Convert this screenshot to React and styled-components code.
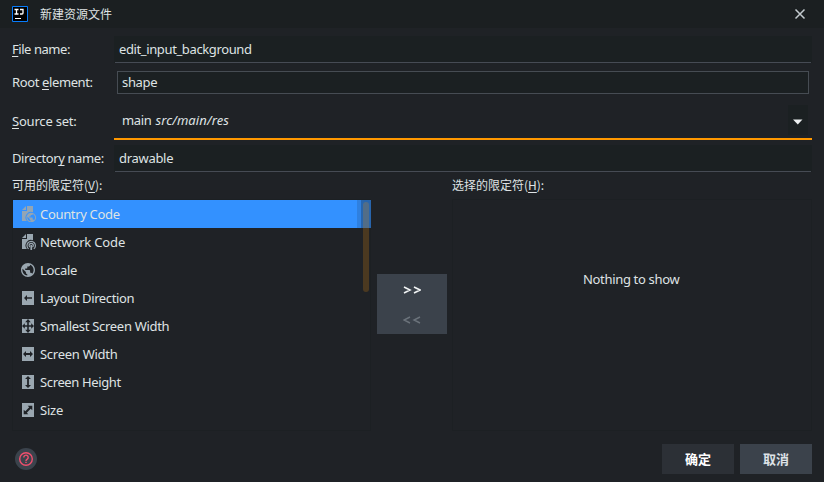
import React from 'react';
import styled, { createGlobalStyle } from 'styled-components';

const Global = createGlobalStyle`
  * { box-sizing: border-box; }
  body { margin: 0; background: #1f2227; }
`;

const Dialog = styled.main`
  width: 824px;
  height: 482px;
  overflow: hidden;
  display: flex;
  flex-direction: column;
  background: #1f2226;
  color: #dfe3e4;
  font: 13px/20px "Noto Sans", "Noto Sans CJK SC", sans-serif;
  white-space: nowrap;
  user-select: none;
`;
const TitleBar = styled.header`
  height: 28px;
  flex: none;
  display: flex;
  align-items: center;
  padding: 0 18px 0 12px;
  background: #1b1f21;
`;
const Title = styled.h1`
  margin: 0 auto 0 12px;
  font: 12px/20px "Noto Sans CJK SC", sans-serif;
`;
const Form = styled.section`
  display: flex;
  flex-direction: column;
  padding: 8px 12px 0;
`;
const Row = styled.div`
  display: grid;
  grid-template-columns: 102px 698px;
  height: ${p => p.$h}px;
  margin-bottom: ${p => p.$gap}px;
  align-items: center;
`;
const Label = styled.label`
  letter-spacing: ${p => p.$ls || 0}px;
  padding-bottom: 1px;
`;
const Key = styled.span`
  text-decoration: underline;
  text-decoration-thickness: 1px;
  text-underline-offset: 2px;
  text-decoration-skip-ink: none;
`;
const Field = styled.div`
  height: 27px;
  padding: 3px 5px 0;
  background: linear-gradient(#464b54, #464b54) 1px 100% / 696px 1px no-repeat #1b2022;
  letter-spacing: ${p => p.$ls || 0}px;
`;
const BoxField = styled.div`
  height: 23px;
  margin: 0 3px;
  padding: 1px 4px;
  line-height: 19px;
  background: #1b2022;
  border: 1px solid #464c53;
  letter-spacing: ${p => p.$ls || 0}px;
`;
const Combo = styled.div`
  height: 38px;
  display: flex;
  align-items: center;
  padding: 0 4px 0 8px;
  border-bottom: 2px solid #ff9800;
  letter-spacing: -0.35px;
  em { margin-left: 4px; letter-spacing: 0.1px; }
`;
const ComboArrow = styled.span`
  width: 20px;
  height: 30px;
  margin-left: auto;
  display: flex;
  align-items: center;
  justify-content: center;
  background: #1b2022;
  svg { margin: 3px 1px 0 0; }
`;
const Columns = styled.section`
  display: grid;
  grid-template-columns: 359px 81px 360px;
  padding: 0 12px;
`;
const ColumnTitle = styled.div`
  height: 27px;
  padding-top: 3px;
  font: 12px/20px "Noto Sans CJK SC", sans-serif;
`;
const Panel = styled.div`
  height: 232px;
  border: 1px solid #1c2023;
  position: relative;
`;
const List = styled.ul`
  margin: 0;
  padding: 0;
  list-style: none;
`;
const Item = styled.li`
  height: 28px;
  display: flex;
  align-items: center;
  gap: 4px;
  padding-left: 7px;
  letter-spacing: ${p => p.$ls || 0}px;
  background: ${p => (p.$selected ? 'linear-gradient(90deg, #3391ff 344px, #2f80df 344px, #2f80df 348px, #2865ac 348px)' : 'none')};
  margin-right: ${p => (p.$selected ? '-1px' : 0)};
`;
const Thumb = styled.div`
  position: absolute;
  top: 2px;
  right: 1px;
  width: 6px;
  height: 90px;
  border-radius: 3px;
  background: linear-gradient(#526d87 26px, #4b3920 26px);
`;
const Transfer = styled.div`
  width: 70px;
  height: 60px;
  margin: 102px 0 0 6px;
  background: #3b424b;
`;
const TransferButton = styled.button`
  display: block;
  width: 70px;
  height: 30px;
  padding: 0;
  border: 0;
  background: none;
  color: ${p => (p.disabled ? '#6b737b' : '#f0f3f4')};
  svg { display: block; margin: 11px auto 9px; }
`;
const Empty = styled.div`
  padding: 69px 0 0 130px;
  letter-spacing: ${p => p.$ls}px;
`;
const Footer = styled.footer`
  display: flex;
  align-items: center;
  padding: 13px 12px 0 15px;
`;
const Help = styled.button`
  width: 22px;
  height: 22px;
  padding: 0;
  border: 0;
  border-radius: 50%;
  margin-right: auto;
  background: #3b434c;
  svg { display: block; }
`;
const Action = styled.button`
  width: 72px;
  height: 30px;
  margin-left: 6px;
  padding: 0;
  border: 0;
  background: ${p => (p.$light ? '#3b424b' : '#2c3036')};
  color: ${p => (p.$light ? '#dde1e6' : '#ffffff')};
  font: bold 13px/30px "Noto Sans CJK SC", sans-serif;
`;

const Svg = p => <svg width="16" height="16" viewBox="0 0 16 16" fill="#9aa7b0" {...p} />;
const Page = () => <path d="M7 0h6v6.2A5.6 5.6 0 0 0 6.8 15H2V5h5zM6 0v4H2z" />;
const Tile = () => <path d="M2 1h12v14H2z" />;
const Globe = () => (
  <path d="M12 2C6.48 2 2 6.48 2 12s4.48 10 10 10 10-4.48 10-10S17.52 2 12 2zm-1 17.93c-3.95-.49-7-3.85-7-7.93 0-.62.08-1.21.21-1.79L9 15v1c0 1.1.9 2 2 2v1.93zm6.9-2.54c-.26-.81-1-1.39-1.9-1.39h-1v-3c0-.55-.45-1-1-1H8v-2h2c.55 0 1-.45 1-1V7h2c1.1 0 2-.9 2-2v-.41c2.93 1.19 5 4.06 5 7.41 0 2.08-.8 3.97-2.1 5.39z" />
);

const icons = {
  country: (
    <Svg fill="#93a5b5"><Page /><g transform="translate(5.4 5.7) scale(.485)"><Globe /></g></Svg>
  ),
  network: (
    <Svg>
      <Page />
      <g fill="none" stroke="#9aa7b0" strokeWidth="1.2">
        <path d="M8.6 14.9a4.2 4.2 0 1 1 5.2 0M10 13.1a2.1 2.1 0 1 1 2.4 0" />
      </g>
      <path d="M10.4 11h1.7v5h-1.7z" />
    </Svg>
  ),
  locale: <Svg><g transform="translate(-.4 -.4) scale(.7)"><Globe /></g></Svg>,
  direction: <Svg><Tile /><path fill="#1f2226" d="M4 8l3-3v2.2h5v1.6H7V11z" /></Svg>,
  smallest: (
    <Svg>
      <Tile />
      <path fill="#1f2226" d="M8 1l2.8 3.2h-2v3h2.4V5.2L14 8l-2.8 2.8v-2H8.8v3h2L8 15l-2.8-3.2h2v-3H4.8v2L2 8l2.8-2.8v2h2.4v-3h-2z" />
    </Svg>
  ),
  width: <Svg><Tile /><path fill="#1f2226" d="M3 8l3-3v2.1h4V5l3 3-3 3V8.9H6V11z" /></Svg>,
  height: <Svg><Tile /><path fill="#1f2226" d="M8 2l3 3H8.9v6H11l-3 3-3-3h2.1V5H5z" /></Svg>,
  size: <Svg><Tile /><path fill="#1f2226" d="M12.3 3.7v4.6l-1.6-1.6-3.9 4 1.5 1.6H3.7V7.7l1.6 1.6 3.9-4-1.5-1.6z" /></Svg>,
};

const qualifiers = [
  ['country', 'Country Code', -0.33],
  ['network', 'Network Code', -0.17],
  ['locale', 'Locale', -0.3],
  ['direction', 'Layout Direction', -0.38],
  ['smallest', 'Smallest Screen Width', -0.3],
  ['width', 'Screen Width', -0.27],
  ['height', 'Screen Height', -0.37],
  ['size', 'Size', -0.2],
];

export default function App() {
  return (
    <>
      <Global />
      <Dialog>
        <TitleBar>
          <svg width="16" height="16" viewBox="0 0 16 16">
            <path fill="#000" stroke="#087cfa" strokeWidth="1" d="M.5.5h15v15H.5z" />
            <path stroke="#fff" strokeWidth="1.3" fill="none" d="M2.5 3.5h4M4.5 3v5M2.5 8h4M8 3.5h3V7q0 1-1 1H8" />
            <path fill="#fff" d="M3 12h6v1H3z" />
          </svg>
          <Title>新建资源文件</Title>
          <svg width="12" height="12" viewBox="0 0 12 12">
            <path stroke="#c3cace" strokeWidth="1.5" d="M1.5 1.5l9 9M10.5 1.5l-9 9" />
          </svg>
        </TitleBar>
        <Form>
          <Row $h={27} $gap={8}>
            <Label $ls={-0.45}><Key>F</Key>ile name:</Label>
            <Field $ls={-0.38}>edit_input_background</Field>
          </Row>
          <Row $h={23} $gap={8}>
            <Label $ls={-0.38}>Root <Key>e</Key>lement:</Label>
            <BoxField $ls={-0.35}>shape</BoxField>
          </Row>
          <Row $h={38} $gap={5}>
            <Label $ls={-0.2}><Key>S</Key>ource set:</Label>
            <Combo>
              main <em>src/main/res</em>
              <ComboArrow>
                <svg width="10" height="6" viewBox="0 0 10 6"><path fill="#eceff0" d="M0 .5h9.5L4.8 5.5z" /></svg>
              </ComboArrow>
            </Combo>
          </Row>
          <Row $h={27} $gap={0}>
            <Label $ls={-0.4}>Director<Key>y</Key> name:</Label>
            <Field $ls={-0.3}>drawable</Field>
          </Row>
        </Form>
        <Columns>
          <div>
            <ColumnTitle>可用的限定符(<Key>V</Key>):</ColumnTitle>
            <Panel>
              <List>
                {qualifiers.map(([icon, name, ls], i) => (
                  <Item key={name} $selected={i === 0} $ls={ls}>{icons[icon]}<span>{name}</span></Item>
                ))}
              </List>
              <Thumb />
            </Panel>
          </div>
          <Transfer>
            <TransferButton>
              <svg width="18" height="10" viewBox="0 0 18 10"><path fill="none" stroke="currentColor" strokeWidth="1.6" d="M1 2l6 3-6 3M11 2l6 3-6 3" /></svg>
            </TransferButton>
            <TransferButton disabled>
              <svg width="18" height="10" viewBox="0 0 18 10"><path fill="none" stroke="currentColor" strokeWidth="1.4" d="M7 2L1 5l6 3M17 2l-6 3 6 3" /></svg>
            </TransferButton>
          </Transfer>
          <div>
            <ColumnTitle>选择的限定符(<Key>H</Key>):</ColumnTitle>
            <Panel><Empty $ls={-0.33}>Nothing to show</Empty></Panel>
          </div>
        </Columns>
        <Footer>
          <Help>
            <svg width="22" height="22" viewBox="0 0 22 22" fill="none" stroke="#f0506e" strokeWidth="1.4">
              <circle cx="11" cy="11" r="6.3" />
              <path d="M8.8 9.4a2.2 2.2 0 1 1 3.4 1.8c-.8.6-1.2.8-1.2 1.8M11 13.7v1.3" />
            </svg>
          </Help>
          <Action>确定</Action>
          <Action $light>取消</Action>
        </Footer>
      </Dialog>
    </>
  );
}
